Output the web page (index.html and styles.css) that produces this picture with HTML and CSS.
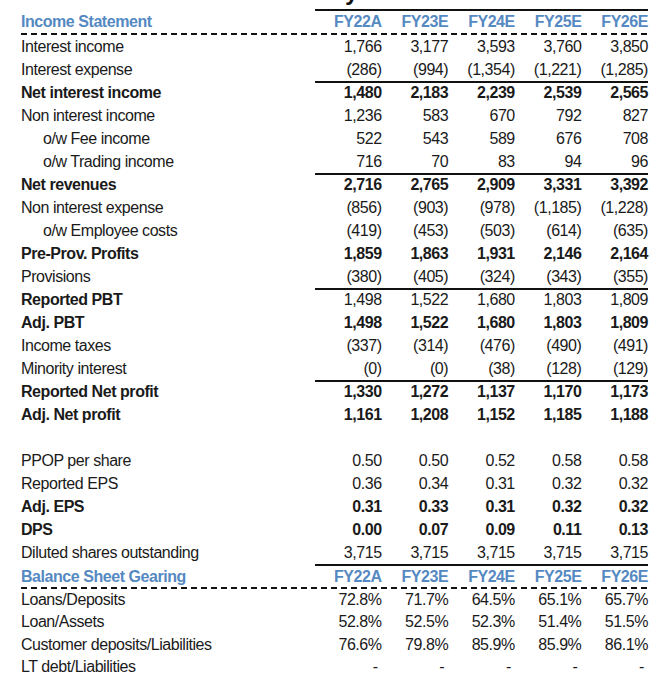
FILE: index.html
```html
<!DOCTYPE html>
<html lang="en">
<head>
<meta charset="utf-8">
<title>Income Statement</title>
<link rel="stylesheet" href="styles.css">
</head>
<body>
<div class="sheet">
  <div class="title"><span class="title-y">y</span></div>
  <div class="topline"></div>

  <div class="row hdr">
    <div class="lbl">Income Statement</div>
    <div class="v">FY22A</div><div class="v">FY23E</div><div class="v">FY24E</div><div class="v">FY25E</div><div class="v">FY26E</div>
  </div>

  <div class="row"><div class="lbl">Interest income</div><div class="v">1,766</div><div class="v">3,177</div><div class="v">3,593</div><div class="v">3,760</div><div class="v">3,850</div></div>
  <div class="row rule"><div class="lbl">Interest expense</div><div class="v">(286)</div><div class="v">(994)</div><div class="v">(1,354)</div><div class="v">(1,221)</div><div class="v">(1,285)</div></div>
  <div class="row bold"><div class="lbl">Net interest income</div><div class="v">1,480</div><div class="v">2,183</div><div class="v">2,239</div><div class="v">2,539</div><div class="v">2,565</div></div>
  <div class="row"><div class="lbl">Non interest income</div><div class="v">1,236</div><div class="v">583</div><div class="v">670</div><div class="v">792</div><div class="v">827</div></div>
  <div class="row"><div class="lbl ind">o/w Fee income</div><div class="v">522</div><div class="v">543</div><div class="v">589</div><div class="v">676</div><div class="v">708</div></div>
  <div class="row rule"><div class="lbl ind">o/w Trading income</div><div class="v">716</div><div class="v">70</div><div class="v">83</div><div class="v">94</div><div class="v">96</div></div>
  <div class="row bold"><div class="lbl">Net revenues</div><div class="v">2,716</div><div class="v">2,765</div><div class="v">2,909</div><div class="v">3,331</div><div class="v">3,392</div></div>
  <div class="row"><div class="lbl">Non interest expense</div><div class="v">(856)</div><div class="v">(903)</div><div class="v">(978)</div><div class="v">(1,185)</div><div class="v">(1,228)</div></div>
  <div class="row"><div class="lbl ind">o/w Employee costs</div><div class="v">(419)</div><div class="v">(453)</div><div class="v">(503)</div><div class="v">(614)</div><div class="v">(635)</div></div>
  <div class="row bold"><div class="lbl">Pre-Prov. Profits</div><div class="v">1,859</div><div class="v">1,863</div><div class="v">1,931</div><div class="v">2,146</div><div class="v">2,164</div></div>
  <div class="row rule"><div class="lbl">Provisions</div><div class="v">(380)</div><div class="v">(405)</div><div class="v">(324)</div><div class="v">(343)</div><div class="v">(355)</div></div>
  <div class="row"><div class="lbl b">Reported PBT</div><div class="v">1,498</div><div class="v">1,522</div><div class="v">1,680</div><div class="v">1,803</div><div class="v">1,809</div></div>
  <div class="row bold"><div class="lbl">Adj. PBT</div><div class="v">1,498</div><div class="v">1,522</div><div class="v">1,680</div><div class="v">1,803</div><div class="v">1,809</div></div>
  <div class="row"><div class="lbl">Income taxes</div><div class="v">(337)</div><div class="v">(314)</div><div class="v">(476)</div><div class="v">(490)</div><div class="v">(491)</div></div>
  <div class="row rule"><div class="lbl">Minority interest</div><div class="v">(0)</div><div class="v">(0)</div><div class="v">(38)</div><div class="v">(128)</div><div class="v">(129)</div></div>
  <div class="row bold"><div class="lbl">Reported Net profit</div><div class="v">1,330</div><div class="v">1,272</div><div class="v">1,137</div><div class="v">1,170</div><div class="v">1,173</div></div>
  <div class="row bold"><div class="lbl">Adj. Net profit</div><div class="v">1,161</div><div class="v">1,208</div><div class="v">1,152</div><div class="v">1,185</div><div class="v">1,188</div></div>
  <div class="row"></div>
  <div class="row"><div class="lbl">PPOP per share</div><div class="v">0.50</div><div class="v">0.50</div><div class="v">0.52</div><div class="v">0.58</div><div class="v">0.58</div></div>
  <div class="row"><div class="lbl">Reported EPS</div><div class="v">0.36</div><div class="v">0.34</div><div class="v">0.31</div><div class="v">0.32</div><div class="v">0.32</div></div>
  <div class="row bold"><div class="lbl">Adj. EPS</div><div class="v">0.31</div><div class="v">0.33</div><div class="v">0.31</div><div class="v">0.32</div><div class="v">0.32</div></div>
  <div class="row bold"><div class="lbl">DPS</div><div class="v">0.00</div><div class="v">0.07</div><div class="v">0.09</div><div class="v">0.11</div><div class="v">0.13</div></div>
  <div class="row rule"><div class="lbl">Diluted shares outstanding</div><div class="v">3,715</div><div class="v">3,715</div><div class="v">3,715</div><div class="v">3,715</div><div class="v">3,715</div></div>

  <div class="row hdr hdr2">
    <div class="lbl">Balance Sheet Gearing</div>
    <div class="v">FY22A</div><div class="v">FY23E</div><div class="v">FY24E</div><div class="v">FY25E</div><div class="v">FY26E</div>
  </div>
  <div class="row tight"><div class="lbl">Loans/Deposits</div><div class="v">72.8%</div><div class="v">71.7%</div><div class="v">64.5%</div><div class="v">65.1%</div><div class="v">65.7%</div></div>
  <div class="row tight"><div class="lbl">Loan/Assets</div><div class="v">52.8%</div><div class="v">52.5%</div><div class="v">52.3%</div><div class="v">51.4%</div><div class="v">51.5%</div></div>
  <div class="row tight"><div class="lbl">Customer deposits/Liabilities</div><div class="v">76.6%</div><div class="v">79.8%</div><div class="v">85.9%</div><div class="v">85.9%</div><div class="v">86.1%</div></div>
  <div class="row tight"><div class="lbl">LT debt/Liabilities</div><div class="v dash">-</div><div class="v dash">-</div><div class="v dash">-</div><div class="v dash">-</div><div class="v dash">-</div></div>
</div>
</body>
</html>
```

FILE: styles.css
```css
html, body {
  margin: 0;
  padding: 0;
  background: #ffffff;
}

body {
  font-family: "Liberation Sans", Arial, sans-serif;
  font-size: 16px;
  letter-spacing: -0.45px;
  color: #1a1a1a;
  overflow: hidden;
}

.sheet {
  width: 627px;
  margin-left: 21px;
}

.title {
  height: 9px;
  overflow: hidden;
}

.title-y {
  display: block;
  margin-top: -20px;
  margin-left: 324px;
  font-weight: bold;
  font-size: 24px;
  line-height: 24px;
  letter-spacing: 0;
  color: #111;
}

.topline {
  margin-left: 294px;
  height: 2px;
  background: #111;
}

.row {
  display: grid;
  grid-template-columns: 294px repeat(5, 1fr);
  height: 23px;
  line-height: 23px;
  white-space: nowrap;
}

.row > div {
  box-sizing: border-box;
  height: 100%;
}

.v {
  text-align: right;
  padding-right: 0;
}

.ind {
  padding-left: 22px;
}

.bold,
.b {
  font-weight: bold;
}

.rule > .v {
  border-bottom: 2px solid #111;
}

.hdr {
  height: 24px;
  line-height: 22px;
  font-weight: bold;
  color: #5589c2;
  background: repeating-linear-gradient(to right, #111 0 6px, transparent 6px 10px) left bottom / 100% 2px no-repeat;
}

.hdr2 {
  height: 25px;
  padding-top: 2px;
  box-sizing: border-box;
}

.tight {
  height: 22.3px;
  line-height: 22.3px;
}

.dash {
  padding-right: 4px;
}
```
